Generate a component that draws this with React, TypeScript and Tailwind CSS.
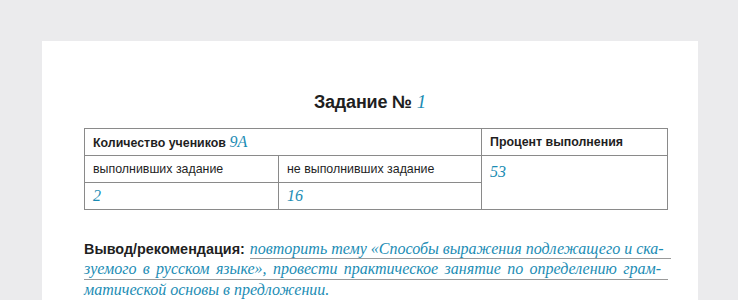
export default function App() {
  const ink = 'text-[#1f1f1f]';
  const hand = "font-['Liberation_Serif',serif] italic text-[#1b8cb4]";

  return (
    <div className="min-h-[300px] bg-[#ebebed] pt-[41px] pl-[42px] pr-[40px] font-['Liberation_Sans',Arial,sans-serif]">
      <div className="bg-white h-[259px] pt-[49px] px-[42px]">
        {/* Заголовок */}
        <h1 className={`text-center text-[18px] font-bold leading-[24px] tracking-[-0.2px] ${ink}`}>
          Задание № <span className={`${hand} font-normal text-[19px]`}>1</span>
        </h1>

        {/* Таблица */}
        <table className={`mt-[14px] w-[584px] border-collapse text-[12.4px] ${ink}`}>
          <tbody>
            <tr className="h-[27px]">
              <td colSpan={2} className="border border-[#8a8a8a] px-2 font-bold">
                Количество учеников <span className={`${hand} font-normal text-[16px]`}>9А</span>
              </td>
              <td className="w-[186px] border border-[#8a8a8a] px-2 font-bold">Процент выполнения</td>
            </tr>
            <tr className="h-[27px]">
              <td className="w-[194px] border border-[#8a8a8a] px-2">выполнивших задание</td>
              <td className="w-[203px] border border-[#8a8a8a] px-2">не выполнивших задание</td>
              <td rowSpan={2} className="border border-[#8a8a8a] px-2 align-top pt-[4px]">
                <span className={`${hand} text-[16px]`}>53</span>
              </td>
            </tr>
            <tr className="h-[27px]">
              <td className="border border-[#8a8a8a] px-2">
                <span className={`${hand} text-[16px]`}>2</span>
              </td>
              <td className="border border-[#8a8a8a] px-2">
                <span className={`${hand} text-[16px]`}>16</span>
              </td>
            </tr>
          </tbody>
        </table>

        {/* Вывод */}
        <div className="mt-[29px] w-[584px]">
          <div className="flex items-end h-[20px]">
            <span className={`whitespace-nowrap text-[14.4px] font-bold leading-[19px] pr-[5px] ${ink}`}>
              Вывод/рекомендация:
            </span>
            <span className={`${hand} flex-1 whitespace-nowrap text-[16px] leading-[19px] border-b border-[#9a9a9a] text-justify [text-align-last:justify] pr-[7px]`}>
              повторить тему «Способы выражения подлежащего и ска-
            </span>
          </div>
          <div className={`${hand} whitespace-nowrap h-[21px] text-[16px] leading-[20px] border-b border-[#9a9a9a] text-justify [text-align-last:justify] pr-[7px]`}>
            зуемого в русском языке», провести практическое занятие по определению грам-
          </div>
          <div className={`${hand} whitespace-nowrap h-[21px] text-[16px] leading-[20px] border-b border-[#9a9a9a]`}>
            матической основы в предложении.
          </div>
        </div>
      </div>
    </div>
  );
}
